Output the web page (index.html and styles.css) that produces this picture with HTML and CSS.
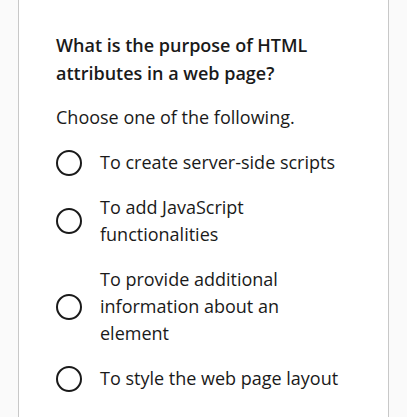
FILE: index.html
```html
<!DOCTYPE html>
<html>
<head>
<meta charset="utf-8">
<link rel="stylesheet" href="styles.css">
</head>
<body>
<div class="card">
  <h2 class="question">What is the purpose of HTML attributes in a web page?</h2>
  <p class="hint">Choose one of the following.</p>
  <ul class="options">
    <li class="option"><span class="radio"></span><span class="label">To create server-side scripts</span></li>
    <li class="option"><span class="radio"></span><span class="label">To add JavaScript functionalities</span></li>
    <li class="option"><span class="radio"></span><span class="label">To provide additional information about an element</span></li>
    <li class="option"><span class="radio"></span><span class="label">To style the web page layout</span></li>
  </ul>
</div>
</body>
</html>
```
FILE: styles.css
```css
html, body {
  margin: 0;
  padding: 0;
  background: #fafafa;
}
body {
  font-family: "Open Sans", sans-serif;
  color: #1a1a1a;
}
.card {
  margin-left: 18px;
  width: 371px;
  min-height: 417px;
  box-sizing: border-box;
  background: #fff;
  border-left: 1px solid #c8c8c8;
  border-right: 1px solid #c8c8c8;
  padding: 31px 36px 0 37px;
}
.question {
  margin: 0;
  font-size: 18px;
  font-weight: 600;
  line-height: 28px;
}
.hint {
  margin: 16px 0 0;
  font-size: 18px;
  line-height: 28px;
}
.options {
  list-style: none;
  margin: 18px 0 0;
  padding: 0;
  display: flex;
  flex-direction: column;
  gap: 18px;
}
.option {
  display: flex;
  align-items: center;
  gap: 18px;
}
.radio {
  flex: none;
  width: 26px;
  height: 26px;
  box-sizing: border-box;
  border: 2.5px solid #1a1a1a;
  border-radius: 50%;
}
.label {
  font-size: 18px;
  line-height: 27px;
  max-width: 244px;
}
```
